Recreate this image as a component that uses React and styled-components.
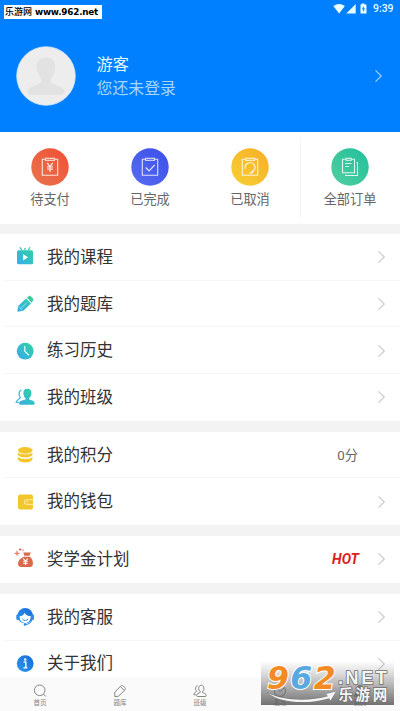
import React from 'react';
import styled, { createGlobalStyle } from 'styled-components';

const GlobalStyle = createGlobalStyle`
  body {
    margin: 0;
    font-family: Roboto, "Noto Sans CJK SC", sans-serif;
  }
`
const Screen = styled.div`
  position: relative;
  display: flex;
  flex-direction: column;
  width: 400px;
  height: 711px;
  overflow: hidden;
  background: #f3f3f3;
`
const Header = styled.header`
  flex: none;
  height: 132px;
  background: #0080ff;
  color: #fff;
`
const StatusBar = styled.div`
  display: flex;
  justify-content: flex-end;
  align-items: center;
  height: 17px;
  padding-right: 6px;
  box-sizing: border-box;
  color: #e8fbff;
`
const Time = styled.span`
  width: 21px;
  margin-left: 5px;
  font-size: 10.4px;
  font-weight: 500;
  line-height: 16px;
  white-space: nowrap;
`
const Profile = styled.div`
  display: flex;
  align-items: center;
  height: 118px;
  padding: 0 17px 0 16px;
`
const ProfileText = styled.div`
  flex: 1;
  margin-left: 20.5px;
  padding-top: 1px;
`
const Name = styled.div`
  color: #e2f7ff;
  font-size: 16.2px;
  line-height: 24px;
`
const Hint = styled.div`
  color: #a5d6fb;
  font-size: 15.9px;
  line-height: 23px;
`
const Orders = styled.div`
  display: flex;
  flex: none;
  height: 92px;
  background: #fff;
`
const Order = styled.div`
  display: flex;
  flex-direction: column;
  align-items: center;
  width: 100px;
  padding-top: 15.5px;
  box-sizing: border-box;
`
const OrderDivider = styled.div`
  width: 1px;
  height: 80px;
  margin: 6px -1px 0 0;
  background: #f5f5f5;
`
const OrderLabel = styled.div`
  margin-top: 4px;
  color: #666;
  font-size: 13.2px;
  line-height: 20px;
`
const Group = styled.section`
  flex: none;
  margin-top: ${props => props.gap || 11}px;
  background: #fff;
`
const Row = styled.div`
  display: flex;
  align-items: center;
  height: 46.7px;
  padding: 0 14px 0 14px;
  background: linear-gradient(#f5f5f5, #f5f5f5) 4px 100% / 100% ${props => (props.last ? 0 : 1)}px no-repeat;
  box-sizing: border-box;
`
const RowLabel = styled.div`
  flex: 1;
  margin-left: 11px;
  padding-top: 1px;
  color: #333;
  font-size: 16.5px;
  line-height: 24px;
`
const Score = styled.span`
  margin: -2px 28px 0 0;
  color: #666;
  font-size: 13.3px;
`
const Hot = styled.span`
  margin-right: 18px;
  color: #dd1d20;
  font-size: 14px;
  font-style: italic;
  font-weight: 700;
`
const TabBar = styled.nav`
  position: absolute;
  left: 0;
  bottom: 0;
  display: flex;
  width: 400px;
  height: 34px;
  background: #fafafa;
`
const Tab = styled.div`
  display: flex;
  flex: 1;
  flex-direction: column;
  align-items: center;
  padding-top: 7px;
  color: #858585;
`
const TabLabel = styled.div`
  margin-top: 1px;
  font-size: 6.5px;
  line-height: 9px;
`
const Stamp = styled.div`
  position: absolute;
  left: 4px;
  top: 5px;
  display: flex;
  align-items: center;
  width: 98px;
  height: 14px;
  padding-left: 1px;
  box-sizing: border-box;
  background: #fff;
  color: #000;
  font: 500 9px/14px "Noto Sans CJK SC", sans-serif;
  white-space: nowrap;
`
const StampUrl = styled.span`
  margin-left: 3px;
  font: 700 8.8px/14px "DejaVu Sans", sans-serif;
  letter-spacing: -0.2px;
`
const Watermark = styled.div`
  position: absolute;
  left: 261px;
  top: 661px;
  width: 133px;
  height: 44px;
  background: linear-gradient(rgba(120, 120, 120, 0), rgba(115, 115, 115, 0.4) 45%, rgba(95, 95, 95, 0.88));
`

function Chevron({ color = '#c8c8c8' }){
  return (
    <svg width="9" height="14" viewBox="0 0 9 14" fill="none" stroke={color} strokeWidth="1.1">
      <path d="M1.5 1.3 7.3 7 1.5 12.7" />
    </svg>
  );
}

function StatusIcons(){
  return (
    <svg width="35" height="12" viewBox="0 0 35 12" fill="currentColor">
      <path d="M.3 2.9Q6.1-1 11.9 2.9L6.1 10.5Z" />
      <path d="M13.3 10.5 22.7 1v9.5Z" />
      <path fillRule="evenodd" d="M28.5.5h3v1h2v9h-6v-9h1ZM30.7 3l-1.8 3.3h1.2V9L32 5.6h-1.3Z" />
    </svg>
  );
}

function Avatar(){
  return (
    <svg width="60" height="60" viewBox="0 0 60 60">
      <circle cx="30" cy="30" r="29.3" fill="#ededed" stroke="#cbe8fa" strokeWidth=".8" />
      <path fill="#e2e2e2" d="M30 11.2c6 0 9.4 4 9.3 9.7-.1 5-2 8.8-4.7 11.2v4.3c3 2.8 13.700 3.700 13.900 9.600 0 1.700-.8 2.800-2.500 2.800H14c-1.700 0-2.600-1.100-2.500-2.800.2-5.900 10.700-6.800 13.800-9.600v-4.300c-2.700-2.400-4.600-6.200-4.700-11.200-.1-5.700 3.400-9.700 9.400-9.700Z" />
    </svg>
  );
}

const orders = [
  { id: 'pay', label: '待支付', colors: ['#e9744d', '#f04f35'] },
  { id: 'done', label: '已完成', colors: ['#596df2', '#394ee8'] },
  { id: 'cancel', label: '已取消', colors: ['#f7d033', '#f6ae27'] },
  { id: 'all', label: '全部订单', colors: ['#52cf9f', '#20bf9c'] }
];

function OrderIcon({ id, colors }){
  return (
    <svg width="38" height="38" viewBox="0 0 38 38" fill="none" stroke="#fff" strokeOpacity=".82" strokeWidth="1.1">
      <defs>
        <linearGradient id={`order-${id}`} x1="0" y1="1" x2="1" y2="0">
          <stop stopColor={colors[0]} />
          <stop offset="1" stopColor={colors[1]} />
        </linearGradient>
      </defs>
      <circle cx="19" cy="19" r="18.7" fill={`url(#order-${id})`} stroke="none" />
      {id === 'all' ? (
        <>
          <path d="M14.5 11.3h-3v13.4h12V11.3h-2.7" />
          <rect x="15" y="10.3" width="5.3" height="2" />
          <path d="M14 15.5h6.5M14 18.5h4M25.5 14.5h1v13H14.7v-1" />
        </>
      ) : (
        <>
          <path d="M14 11.3h-2.7v16h15.4v-16H24" />
          <rect x="14.5" y="10.3" width="9" height="2" />
        </>
      )}
      {id === 'pay' && <path d="m16.2 15 2.8 3.5 2.8-3.5M19 18.500v5.500M16 18.800h6M16 21.200h6" strokeWidth="1.300" />}
      {id === 'done' && <path d="m14.7 19.5 3.4 3.4 5.7-6" strokeWidth="1.3" />}
      {id === 'cancel' && <path d="M14.500 20.800a4.800 4.800 0 1 1 7.300 2.600M18.300 24.800h3v-2.500" strokeWidth="1.200" />}
    </svg>
  );
}

const shapes = {
  course: (
    <>
      <path d="M7.7 4.3 6 1.2M14.3 4.3 16 1.2M11 4V2" stroke="url(#teal)" strokeWidth="1.3" />
      <rect x="3" y="4.3" width="16" height="14" rx="1.5" fill="url(#teal)" />
      <path d="m9 8 5 3.3L9 14.6Z" fill="#fff" />
    </>
  ),
  bank: (
    <>
      <path d="m12 5.600 5 5-7.600 7.200-5.500.9-.6-.6.9-5Z" fill="url(#teal)" />
      <path d="m12.900 4.800 1.700-1.500c.7-.6 1.500-.6 2.100 0l2.300 2.300c.6.7.6 1.400 0 2l-1.400 2.100Z" fill="#3ec99b" />
      <path d="m5 13.800 3.200 3.200M7.200 15.200l5.300-5.400" stroke="#caf4f2" strokeWidth=".7" />
    </>
  ),
  history: (
    <>
      <circle cx="11.2" cy="11.2" r="8.4" fill="url(#teal)" />
      <path d="M10.8 6v5.2l4.2 4" fill="none" stroke="#d7fff5" strokeWidth="1.3" />
    </>
  ),
  team: (
    <>
      <path d="M7.5 4.200C4.500 4.800 4.500 9.500 6.300 11.500c-.2 2-3.700 1.600-4.100 4.900h2.600" fill="none" stroke="#45b9e5" strokeWidth="1.3" />
      <path d="M13.4 2.800c3 0 4.200 2 4 4.800-.1 2.200-1 3.800-2.300 4.700v1c1.300 1.200 5.600 1 5.600 4.200 0 .8-.4 1.200-1.200 1.200H6.300c-.8 0-1.200-.4-1.200-1.200 0-3.200 5-3 6.400-4.200v-1c-1.300-.9-2-2.500-2.100-4.700-.2-2.800 1-4.800 4-4.800Z" fill="url(#teal)" />
    </>
  ),
  points: (
    <g fill="#f3c52f">
      <ellipse cx="11.2" cy="6.3" rx="7.2" ry="3.4" />
      <path d="M4 8.300c1.500 3 12.900 3 14.400 0v2.500c-1.500 3.700-12.900 3.700-14.400 0Z" />
      <path d="M4 12.800c1.500 3 12.900 3 14.400 0v2.700c-1.500 4-12.900 4-14.400 0Z" />
    </g>
  ),
  wallet: (
    <>
      <rect x="4" y="3.600" width="15" height="15" rx="2" fill="#f3c52f" />
      <path d="M19 8.700h-6.500a2.300 2.300 0 0 0 0 4.600H19" fill="none" stroke="#fff0b6" strokeWidth="1" />
      <circle cx="13.3" cy="11" r=".7" fill="#fff" />
    </>
  ),
  scholarship: (
    <>
      <path d="M9.300 4.500h7.500l-1.300 3.200h-5.200ZM9.700 8.800h6.200c2.300 1.800 3 4.200 3 6.500 0 2.600-1 3.800-3 3.800H7.200c-2.200 0-3.200-1.200-3.200-3.500 0-2.700 2-5 5.700-6.800Z" fill="#d96b4d" />
      <path d="m9.200 10.500 2.300 2.500 2.300-2.500M11.500 13v4M9.200 13.300h4.600M9.200 15.200h4.600" fill="none" stroke="#fff" strokeWidth="1.100" />
      <path d="M3 2.800v5M.5 5.300h5M6.200.2v2.600M4.900 1.500h2.600M9 1.600v1.600" stroke="#df674c" strokeWidth="1" />
    </>
  ),
  service: (
    <>
      <circle cx="11.2" cy="9.800" r="7.700" fill="url(#blue)" />
      <path d="M5.400 10.300c3.400-.2 4.600-2 5.200-3.600 1 2.200 3.100 3.300 6.200 3.500-.2 4-2.400 6.800-5.600 6.800s-5.600-2.600-5.800-6.700Z" fill="#fff" />
      <rect x="2.300" y="8.300" width="3" height="5.600" rx="1.500" fill="#2b8de9" />
      <rect x="17" y="8.300" width="3" height="5.600" rx="1.500" fill="#2b8de9" />
      <path d="M18 13.500c-.8 3.200-3 4.800-6.500 5M8.300 13c1.500 1.900 4.300 1.900 5.800 0" fill="none" stroke="#2386e7" />
      <circle cx="11" cy="18.500" r="1.200" fill="#2386e7" />
    </>
  ),
  about: (
    <>
      <circle cx="11.2" cy="10.600" r="8.400" fill="url(#blue)" />
      <circle cx="11.2" cy="6.500" r="1.300" fill="#e3f7ff" />
      <path d="M9.500 9h2.300v5.500M9.500 14.800h3.800" fill="none" stroke="#e3f7ff" strokeWidth="1.500" />
    </>
  )
};

function RowIcon({ name }){
  return (
    <svg width="22" height="22" viewBox="0 0 22 22">
      <defs>
        <linearGradient id="teal" gradientUnits="userSpaceOnUse" x1="3" y1="19" x2="18" y2="3">
          <stop stopColor="#3aaaf0" />
          <stop offset="1" stopColor="#30d1a4" />
        </linearGradient>
        <linearGradient id="blue" x1="0" y1="1" x2="1" y2="0">
          <stop stopColor="#2d9bed" />
          <stop offset="1" stopColor="#1768d8" />
        </linearGradient>
      </defs>
      {shapes[name]}
    </svg>
  );
}

const tabShapes = {
  home: <><circle cx="6.700" cy="6.300" r="5.300" /><path d="m10.400 10.100 2.400 2.400" /></>,
  bank: <><path d="m1.700 8.200 6.200-6.300c.7-.7 1.500-.7 2.200 0l1.800 1.800c.7.7.7 1.500 0 2.200l-6.300 6.200-3.700.7Z" /><path d="m7.500 2.600 3.700 3.800" /></>,
  team: <><path d="M8.300 1.300c3.200 0 3.300 4.500 1.200 6.200v1c1.500.8 3.600.7 3.600 3 0 .7-.4 1-1 1H4.700c-.7 0-1-.3-1-1 0-2.300 2.200-2.200 3.400-3v-1C5 5.800 5.100 1.300 8.300 1.300Z" /><path d="M4.600 1.700C2.100 2 2 5.600 3.600 7.300c0 1.200-2.800.7-2.800 3.500h2" /></>,
  find: <><circle cx="7" cy="7" r="5.500" /><path d="m3.200 4 3.800 3.500L11 4" /></>,
  mine: <path fill="currentColor" d="M7 1.200c3.300 0 3.500 4.500 1.300 6.300v1c1.500.8 4.500.7 4.500 4H1.200c0-3.300 3-3.200 4.500-4v-1C3.500 5.700 3.700 1.200 7 1.200Z" />
};

function TabItem({ icon, label }){
  return (
    <Tab>
      <svg width="14" height="14" viewBox="0 0 14 14" fill="none" stroke="currentColor" strokeWidth="1">
        {tabShapes[icon]}
      </svg>
      <TabLabel>{label}</TabLabel>
    </Tab>
  );
}

function SiteWatermark(){
  return (
    <Watermark>
      <svg width="133" height="44" viewBox="0 0 133 44">
        <text x="6" y="27.5" fontFamily="DejaVu Sans" fontWeight="700" fontStyle="italic" fontSize="31.5" letterSpacing="1.4" stroke="#fff" strokeWidth="2" paintOrder="stroke">
          <tspan fill="#f28b25">9</tspan>
          <tspan fill="#59a9e0">6</tspan>
          <tspan fill="#f28b25">2</tspan>
        </text>
        <g fill="#f5f5f5" stroke="#707070" strokeWidth="1.6" paintOrder="stroke">
          <text x="77" y="22.5" fontFamily="Liberation Sans" fontWeight="700" fontSize="18" letterSpacing="2.6">.NET</text>
          <text x="77.5" y="38.5" fontFamily="Noto Sans CJK SC" fontWeight="700" fontSize="14.5" letterSpacing="2.6">乐游网</text>
          <path d="M6 31.500c16 8.500 42 9 61 3.800l-2-2.300 10-2.500-5.500 9-1.500-2.300C46 43.500 20 42.500 6 31.500Z" strokeWidth=".6" />
        </g>
      </svg>
    </Watermark>
  );
}

function App(){
  return (
    <Screen>
      <GlobalStyle />
      <Header>
        <StatusBar>
          <StatusIcons />
          <Time>9:39</Time>
        </StatusBar>
        <Profile>
          <Avatar />
          <ProfileText>
            <Name>游客</Name>
            <Hint>您还未登录</Hint>
          </ProfileText>
          <Chevron color="#a5d6fb" />
        </Profile>
      </Header>
      <Orders>
        {orders.map(order => (
          <React.Fragment key={order.id}>
            {order.id === 'all' && <OrderDivider />}
            <Order>
              <OrderIcon {...order} />
              <OrderLabel>{order.label}</OrderLabel>
            </Order>
          </React.Fragment>
        ))}
      </Orders>
      <Group gap={10}>
        <Row><RowIcon name="course" /><RowLabel>我的课程</RowLabel><Chevron /></Row>
        <Row><RowIcon name="bank" /><RowLabel>我的题库</RowLabel><Chevron /></Row>
        <Row><RowIcon name="history" /><RowLabel>练习历史</RowLabel><Chevron /></Row>
        <Row last><RowIcon name="team" /><RowLabel>我的班级</RowLabel><Chevron /></Row>
      </Group>
      <Group>
        <Row><RowIcon name="points" /><RowLabel>我的积分</RowLabel><Score>0分</Score></Row>
        <Row last><RowIcon name="wallet" /><RowLabel>我的钱包</RowLabel><Chevron /></Row>
      </Group>
      <Group>
        <Row last><RowIcon name="scholarship" /><RowLabel>奖学金计划</RowLabel><Hot>HOT</Hot><Chevron /></Row>
      </Group>
      <Group>
        <Row><RowIcon name="service" /><RowLabel>我的客服</RowLabel><Chevron /></Row>
        <Row last><RowIcon name="about" /><RowLabel>关于我们</RowLabel><Chevron /></Row>
      </Group>
      <TabBar>
        <TabItem icon="home" label="首页" />
        <TabItem icon="bank" label="题库" />
        <TabItem icon="team" label="班级" />
        <TabItem icon="find" label="发现" />
        <TabItem icon="mine" label="我的" />
      </TabBar>
      <Stamp>乐游网<StampUrl>www.962.net</StampUrl></Stamp>
      <SiteWatermark />
    </Screen>
  );
}

export default App;
